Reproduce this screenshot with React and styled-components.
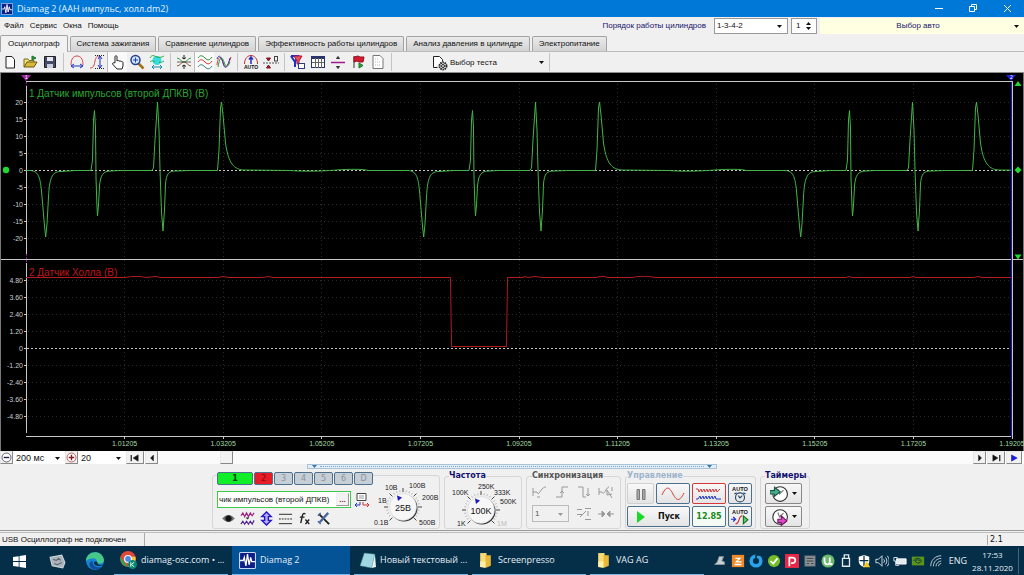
import React, { useState } from "react";
import styled, { createGlobalStyle } from "styled-components";

const GlobalStyle = createGlobalStyle`
  * {
    box-sizing: border-box;
  }
  body {
    margin: 0;
    background: #f0f0f0;
    color: #111;
    font-family: "Liberation Sans", Arial, sans-serif;
    font-size: 8px;
    line-height: 10px;
  }
  button, input, select {
    margin: 0;
    padding: 0;
    border: none;
    border-radius: 0;
    background: none;
    color: inherit;
    font: inherit;
  }
  svg {
    display: block;
    flex-shrink: 0;
  }
`;

const Window = styled.div`
  display: flex;
  flex-direction: column;
  min-height: 100vh;
`;

const TitleBar = styled.header`
  display: flex;
  align-items: center;
  height: 17px;
  background: #0078d7;
  color: #e4f2ff;
  font-family: "Open Sans", "Noto Sans", sans-serif;
  font-size: 9px;
  h1 {
    flex: 1;
    margin: 0 0 0 4px;
    font-size: inherit;
    font-weight: normal;
  }
  > svg {
    margin-left: 1px;
  }
`;

const WindowButton = styled.button`
  display: flex;
  align-items: center;
  justify-content: center;
  width: 34px;
  height: 17px;
`;

const MenuRow = styled.div`
  display: flex;
  align-items: center;
  height: 18px;
  padding-left: 4px;
  nav {
    display: flex;
    flex: 1;
    gap: 6px;
  }
`;

const OrderLabel = styled.label`
  margin-right: 8px;
  color: #15156e;
`;

const SelectWrap = styled.div`
  position: relative;
  width: ${(p) => p.$width || "auto"};
  height: ${(p) => p.$height || "16px"};
  margin-right: ${(p) => p.$gap || "0"};
  border: ${(p) => p.$border || "none"};
  background: ${(p) => p.$bg || "#fff"};
  color: ${(p) => p.$color || "#111"};
  font-size: ${(p) => p.$size || "8px"};
  select {
    display: block;
    width: 100%;
    height: 100%;
    padding-left: 2px;
    padding-right: ${(p) => (p.$align ? "10px" : "0")};
    appearance: none;
    text-align-last: ${(p) => p.$align || "left"};
  }
  svg {
    position: absolute;
    right: 5px;
    top: 50%;
    margin-top: -1px;
    pointer-events: none;
  }
`;

const Spinner = styled.div`
  display: flex;
  align-items: center;
  width: 26px;
  height: 16px;
  margin-right: 3px;
  border: 1px solid #999;
  background: #fff;
  input {
    width: 14px;
    padding-left: 4px;
  }
  div {
    display: flex;
    flex-direction: column;
    gap: 2px;
  }
  button {
    display: block;
  }
`;

const TabRow = styled.div`
  display: flex;
  align-items: flex-end;
  gap: 2px;
  height: 17px;
  border-bottom: 1px solid #bcbcbc;
`;

const Tab = styled.button`
  height: ${(p) => (p.$active ? "17px" : "15px")};
  padding: 0 ${(p) => (p.$active ? "7px" : "6px")};
  margin-bottom: ${(p) => (p.$active ? "-1px" : "0")};
  border: 1px solid #a3a3a3;
  border-bottom: none;
  border-radius: 2px 2px 0 0;
  background: ${(p) =>
    p.$active ? "#f2f2f2" : "linear-gradient(#eaeaea, #d3d3d3)"};
`;

const ToolRow = styled.div`
  display: flex;
  align-items: center;
  height: 21px;
  border-bottom: 1px solid #8d8d8d;
`;

const ToolButton = styled.button`
  display: flex;
  align-items: center;
  justify-content: center;
  width: 20px;
  height: 20px;
  background: ${(p) => (p.$pressed ? "#fafafa" : "none")};
  border-left: ${(p) => (p.$pressed ? "1px solid #bbb" : "none")};
`;

const Divider = styled.div`
  width: 1px;
  height: 18px;
  margin: 0 3px;
  background: #c4c4c4;
`;

const TestButton = styled.button`
  display: flex;
  align-items: center;
  gap: 2px;
  width: 151px;
  height: 20px;
  padding: 1px 2px 0 37px;
  text-align: left;
  span {
    flex: 1;
  }
`;

const Scope = styled.main`
  flex: 1;
  background: #000;
  svg {
    width: 100%;
    height: auto;
  }
`;

const ScrollRow = styled.div`
  display: flex;
  align-items: center;
  height: 13px;
  background: #fff;
`;

const StepButton = styled.button`
  display: flex;
  align-items: center;
  justify-content: center;
  width: ${(p) => p.$width || "13px"};
  height: 13px;
  margin-right: ${(p) => p.$gap || "1px"};
  border: 1px solid #e8e8e8;
  border-right-color: #888;
  border-bottom-color: #888;
  background: #f2f2f2;
`;

const Track = styled.div`
  flex: 1;
  height: 13px;
  padding-left: 61px;
  background: #fbfbfb;
`;

const Splitter = styled.div`
  align-self: center;
  display: flex;
  align-items: center;
  justify-content: space-between;
  width: 40%;
  height: 5px;
  padding: 0 4px;
  margin-bottom: 2px;
  border: 1px solid #a9c4da;
  background: #e3edf6;
  i {
    flex: 1;
    margin: 0 3px;
    border-top: 1px dotted #7ea6c8;
  }
`;

const Panel = styled.section`
  display: flex;
  justify-content: center;
  gap: 4px;
  height: 60px;
  padding-right: 2px;
  border-bottom: 1px solid #9a9a9a;
`;

const Group = styled.fieldset`
  min-width: 0;
  height: 58px;
  width: ${(p) => p.$width};
  margin: 0;
  padding: 2px ${(p) => p.$pad || "6px"} 0;
  border: 1px solid #d6d6d6;
  border-radius: 3px;
  legend {
    margin-left: ${(p) => p.$indent || "0"};
    padding: 0;
    color: ${(p) => p.$color || "#101070"};
    font-family: "DejaVu Sans", sans-serif;
    font-size: 8px;
    line-height: 10px;
    font-weight: bold;
  }
`;

const ChannelGroup = styled.div`
  display: flex;
  width: 228px;
  height: 54px;
  margin-top: 4px;
  padding-left: 4px;
  border: 1px solid #d6d6d6;
  border-radius: 3px;
  > svg {
    margin-top: 4px;
  }
`;

const ChannelSide = styled.div`
  width: 157px;
  margin-top: -4px;
  flex-shrink: 0;
`;

const ChannelRow = styled.div`
  display: flex;
  gap: 1px;
`;

const ChannelButton = styled.button`
  width: ${(p) => (p.$wide ? "36px" : "19px")};
  height: 13px;
  border: 1px solid #4e708f;
  border-radius: 2px;
  background: ${(p) => p.$bg || "#c6ced6"};
  color: ${(p) => p.$color || "#8b939b"};
  font-family: "DejaVu Sans", sans-serif;
  font-weight: ${(p) => (p.$wide ? "bold" : "normal")};
`;

const NameRow = styled.div`
  display: flex;
  align-items: center;
  gap: 3px;
  margin-top: 6px;
`;

const NameField = styled.div`
  display: flex;
  align-items: center;
  width: 134px;
  height: 17px;
  padding: 1px;
  border: 1px solid #3fc94c;
  background: #fff;
  input {
    flex: 1;
    min-width: 0;
  }
  button {
    width: 13px;
    height: 13px;
    border: 1px solid #eee;
    border-right-color: #999;
    border-bottom-color: #999;
    background: #f2f2f2;
    color: #a02020;
    font-weight: bold;
    line-height: 6px;
  }
`;

const IconRow = styled.div`
  display: flex;
  gap: 3px;
  margin-top: 2px;
  padding-left: 4px;
  button {
    width: 16px;
    height: 16px;
  }
`;

const SyncGrid = styled.div`
  display: grid;
  grid-template-columns: repeat(4, 17px);
  gap: 5px;
  align-items: center;
  button {
    height: 17px;
  }
  > div {
    grid-column: span 2;
  }
`;

const ControlGrid = styled.div`
  display: grid;
  grid-template-columns: 27px 34px 34px 24px;
  gap: 2px;
`;

const TimerColumn = styled.div`
  display: grid;
  grid-template-columns: 37px;
  gap: 2px;
`;

const PanelButton = styled.button`
  grid-column: ${(p) => (p.$wide ? "span 2" : "auto")};
  display: flex;
  align-items: center;
  justify-content: center;
  gap: ${(p) => p.$gap || "0"};
  height: 21px;
  border: 1px solid ${(p) => p.$edge || "#4e708f"};
  border-radius: 2px;
  background: ${(p) => p.$bg || "linear-gradient(#f8f8f8, #e4e4e4)"};
  color: ${(p) => p.$color || "#111"};
  font-family: "DejaVu Sans", sans-serif;
  font-size: 8px;
  font-weight: bold;
`;

const StatusBar = styled.footer`
  display: flex;
  align-items: center;
  height: 14px;
  margin-top: 1px;
  border-top: 1px solid #bdbdbd;
  p {
    margin: 0;
    padding-left: 2px;
    line-height: 13px;
    border-right: 1px solid #aaa;
    width: 145px;
  }
  span {
    margin-left: auto;
    width: 37px;
    padding-left: 2px;
    border-left: 1px solid #aaa;
    font-family: "DejaVu Sans", sans-serif;
  }
`;

const TaskBar = styled.nav`
  display: flex;
  height: 30px;
  background: #052e49;
  color: #e6eef4;
  font-family: "Open Sans", "Noto Sans", sans-serif;
  font-size: 9px;
`;

const Launcher = styled.button`
  display: flex;
  align-items: center;
  justify-content: center;
  width: 38px;
`;

const Task = styled.button`
  display: flex;
  align-items: center;
  gap: 4px;
  width: ${(p) => (p.$active ? "118px" : "114px")};
  margin-right: 4px;
  padding-left: ${(p) => (p.$active ? "7px" : "5px")};
  border-bottom: 2px solid #76b9ed;
  background: ${(p) => (p.$active ? "#045397" : "none")};
  white-space: nowrap;
`;

const Tray = styled.div`
  display: flex;
  align-items: center;
  margin-left: auto;
  gap: 4px;
  > span {
    margin-left: 2px;
  }
`;

const Clock = styled.time`
  width: 48px;
  padding-right: 4px;
  margin: 0 5px 0 0;
  border-right: 1px solid #42637a;
  text-align: center;
  font-size: 8px;
  line-height: 13px;
`;

const Icon = ({ size = 16, children }) => (
  <svg
    width={size}
    height={size}
    viewBox="0 0 16 16"
    fill="none"
    stroke="#222"
    aria-hidden="true"
  >
    {children}
  </svg>
);

const Arrow = ({ up, color = "#111" }) => (
  <svg width="5" height="3" viewBox="0 0 5 3" aria-hidden="true">
    <path d={up ? "M0 3h5L2.5 0z" : "M0 0h5L2.5 3z"} fill={color} />
  </svg>
);

const AutoText = ({ y }) => (
  <text
    x="8"
    y={y}
    textAnchor="middle"
    fontFamily="Liberation Sans, Arial"
    fontSize="5"
    fontWeight="bold"
    fill="#111"
    stroke="none"
  >
    AUTO
  </text>
);

const DiamagIcon = ({ size }) => (
  <Icon size={size}>
    <rect x=".5" y=".5" width="15" height="15" rx="1" fill="#0b1f86" stroke="#c9d6f0" />
    <path d="M1 8h3l1-3 1.5 8L8 2l1.5 10L11 5l1 4h3" stroke="#fff" strokeWidth="1.2" />
  </Icon>
);

const toolGroups = [
  [
    ["Новый", <path d="M4 2.500h6l2.500 3v8.500H4z" fill="#fff" />],
    [
      "Открыть",
      <>
        <path d="M2 13V5h4l1 1.500h5v2" fill="#f3e27a" stroke="#77701c" />
        <path d="M2 13l3-5h10l-3 5z" fill="#d9b93a" stroke="#665a10" />
        <path d="M10 2v4l4-2z" fill="#1ca038" stroke="#1c7030" />
      </>,
    ],
    [
      "Сохранить",
      <>
        <path d="M2.500 2.500h11v11h-11z" fill="#454b66" />
        <path d="M5 3h6v4H5z" fill="#e6e9f4" stroke="none" />
        <path d="M5 10h6v4H5z" fill="#c9cede" stroke="none" />
      </>,
    ],
  ],
  [
    [
      "По горизонтали",
      <>
        <path d="M2 11C2 4 5 2 8 2s6 2 6 9" stroke="#d34848" />
        <path d="M2 12h12M5 10l-3 2 3 2M11 10l3 2-3 2" stroke="#2030c0" />
      </>,
    ],
    [
      "По вертикали",
      <>
        <path d="M1 14c4 0 4-3 5-7s2-5 4-5" stroke="#d34848" />
        <path d="M11 2v12M9 5l2-3 2 3M9 11l2 3 2-3" stroke="#2030c0" />
        <path d="M6 1.500h9M6 14.500h9" strokeDasharray="1 1" />
      </>,
    ],
    [
      "Рука",
      <path
        d="M5 9V2.500c0-1 2-1 2 0V7c1-1 2-.5 2 .3 1-.8 2-.3 2 .5 1-.7 2 0 2 1V12l-1 3H7l-4.500-5c0-1.500 1.500-1.500 2.500-1z"
        fill="#fff"
      />,
      true,
    ],
    [
      "Лупа",
      <>
        <path d="M9.500 9.500l5 5" stroke="#a0701c" strokeWidth="2.500" />
        <circle cx="6.500" cy="6" r="4.500" fill="#cfe8ff" stroke="#26408c" strokeWidth="1.500" />
        <path d="M4 6h5M6.500 3.500v5" stroke="#2040c0" />
      </>,
    ],
    [
      "Авто масштаб",
      <>
        <circle cx="8" cy="6.500" r="4.500" fill="#36dce0" stroke="none" />
        <path d="M1 4c2-4 4-2 7-1s5 0 7-1" stroke="#28a844" />
        <path d="M1 8c2-2 4-1 5 0M10 8c2 1 3 0 5-1" stroke="#28a844" />
        <path d="M3 13h10M5 11l-2 2 2 2M11 11l2 2-2 2" stroke="#1b8aa8" />
      </>,
    ],
  ],
  [
    [
      "Сжать",
      <>
        <path d="M1 4c3 0 4 4 7 4s4-4 7-4" stroke="#3a9a48" />
        <path d="M1 12c3 0 4-4 7-4s4 4 7 4" stroke="#8a5a30" />
        <path d="M1 8h14" stroke="#444" strokeWidth=".8" />
        <path d="M8 1v4M6 3.500L8 5l2-1.500M8 15v-4M6 12.500L8 11l2 1.500" />
      </>,
    ],
    [
      "Осциллограммы",
      <>
        <path d="M1 4c2-3 4-3 7 0s5 2 7-1" stroke="#2a9a3a" />
        <path d="M1 8c2-3 4-3 7 0s5 2 7-1" stroke="#d33" />
        <path d="M1 13c2-3 4-3 7 0s5 2 7-1" stroke="#388080" />
      </>,
      true,
    ],
    [
      "Наложение",
      <>
        <path d="M1 11c1-9 4-10 6-3s4 7 8-5" stroke="#d33" />
        <path d="M1 5c2-5 4-3 6 4s4 6 7-5" stroke="#33b" />
        <path d="M2 13C4 2 6 2 8 8s4 5 6 0" stroke="#2a9a3a" />
      </>,
    ],
  ],
  [
    [
      "Авто",
      <>
        <path d="M1.500 10C1.500 4 5 1.500 8 1.500s6.500 2.500 6.500 8.500" stroke="#c03030" />
        <path d="M8 3v7M6 5.500L8 3l2 2.500" stroke="#2030c0" strokeWidth="1.500" />
        <AutoText y="15" />
      </>,
    ],
    [
      "Ноль",
      <>
        <path d="M0 9h16" stroke="#555" strokeDasharray="2 1" />
        <path d="M3.500 4h4l-2 3zM3.500 14h4l-2-3z" fill="#b01830" stroke="#801020" />
        <rect x="11.500" y="2.500" width="3" height="4.500" stroke="#444" />
      </>,
    ],
  ],
  [
    [
      "Фильтр",
      <>
        <path d="M1 2l4 6v5M1 2h7L5 8" stroke="#2030c0" strokeWidth="2" />
        <path d="M4 2h8L9 7v3H7V7z" fill="#e05060" stroke="#b01840" />
        <rect x="8.500" y="9.500" width="6" height="5" fill="#fff" stroke="#2b3d80" />
      </>,
    ],
    [
      "Таблица",
      <>
        <rect x="1.500" y="2.500" width="13" height="11" fill="#fff" stroke="#28346a" />
        <path d="M2 4h12" stroke="#28346a" strokeWidth="2" />
        <path d="M5.500 4v10M8.500 4v10M11.500 4v10M2 8.500h12" stroke="#666" />
      </>,
    ],
    [
      "Разделить",
      <>
        <path d="M1 8.500h14" stroke="#a01890" strokeWidth="1.500" />
        <path d="M6.500 4.500h3L8 2.500zM6.500 12.500h3L8 14.500z" fill="#333" stroke="#333" />
      </>,
    ],
    [
      "Маркер",
      <>
        <path d="M4 2v12" stroke="#333" />
        <path d="M4 3l4-1 2 1h4l-1 5H9L7 7 4 8z" fill="#d81830" stroke="#901020" />
        <path d="M9 9v5l4-2.500z" fill="#28b040" stroke="#187028" />
      </>,
    ],
    [
      "Отчет",
      <>
        <path d="M3 1.500h7l3 3V14.500H3z" fill="#fff" stroke="#777" />
        <path d="M5 5h3M5 8h6M5 11h5" stroke="#bbb" strokeDasharray="1 1" />
      </>,
    ],
  ],
];

const tabs = [
  "Осциллограф",
  "Система зажигания",
  "Сравнение цилиндров",
  "Эффективность работы цилиндров",
  "Анализ давления в цилиндре",
  "Электропитание",
];

const gridX = [1, 2, 3, 4, 5, 6, 7, 8, 9, 10].map((n) => 26 + n * 98.6);
const rows1 = [20, 15, 10, 5, 0, -5, -10, -15, -20];
const rows2 = ["4.80", "3.60", "2.40", "1.20", "0", "-1.20", "-2.40", "-3.60", "-4.80"];
const rowY = (zero, i) => zero + Math.round((i - 4) * 16.9) + 0.5;

// one crankshaft turn, the same shape repeats three times
const pulse =
  "M26 170.500H30C38 171 40 176 41.500 191L44.500 226L45.700 237L47 224L48.500 197C49.500 178 52 172 60 171.500L76 170.500H91L92.500 160L93.500 120L94.500 110.500L95.500 128L96 178L97 207L97.500 216L98.500 205L99.500 186C100.500 175 103 171 111 171L120 170.500H152L153.500 168L155 140L157.500 102L159 130L160 170L161.500 212L163 231L164.500 210L165.500 184C166.500 173 169 171 176 171L190 170.500H217.500L219 150L220.500 108L221.500 102L223 115L225.500 143C228 160 232 169 243 170L290 170.500C310 172 330 170.500 337 170C350 169 364 169 368 170.500H405";

const Chart = () => (
  <svg viewBox="0 73 1024 378" fontFamily="Liberation Sans, Arial" fontSize="7" role="img">
    <defs>
      <clipPath id="plot">
        <rect x="26" y="82" width="985" height="354" />
      </clipPath>
    </defs>
    <g stroke="#292d29" strokeDasharray="1 3" shapeRendering="crispEdges">
      {gridX.slice(0, 9).map((x) => (
        <path key={x} d={`M${x} 84V436`} />
      ))}
      {rows1.map((v, i) => (
        <path key={v} d={`M28 ${rowY(170, i)}H1011M28 ${rowY(348, i)}H1011`} />
      ))}
    </g>
    <g stroke="#c8c8c8" shapeRendering="crispEdges">
      <path d="M26 81.500H1012M1 259.500H1023M26 436.500H1012" />
      <path d="M26.500 86V255M26.500 263V433M1012.500 81V437" />
      <path d="M.5 73V451M1023.500 73V451" stroke="#777" />
      {rows1.map((v, i) => (
        <path key={v} d={`M24 ${rowY(170, i)}h3M24 ${rowY(348, i)}h3`} />
      ))}
      {gridX.map((x) => (
        <path key={x} d={`M${x} 436v3`} />
      ))}
      <path d="M27 170.500H1011M27 348.500H1011" strokeDasharray="2 2" />
    </g>
    <path d="M1011.500 82V437" stroke="#1414c8" />
    <path d="M26.500 82v4M26.500 254v9" stroke="#8a188a" strokeDasharray="2 1" />
    <g fill="#cccccc" textAnchor="end">
      {rows1.map((v, i) => (
        <text key={v} x="23" y={rowY(172, i)}>
          {v}
        </text>
      ))}
      {rows2.map((v, i) => (
        <text key={v} x="23" y={rowY(350, i)}>
          {v}
        </text>
      ))}
    </g>
    <g fill="#a4dca4" textAnchor="middle">
      {gridX.map((x, i) => (
        <text key={x} x={x} y="446">
          {(1.01205 + i * 0.02).toFixed(5)}
        </text>
      ))}
    </g>
    <g clipPath="url(#plot)" fill="none" strokeWidth="1">
      <g stroke="#43b548">
        <path d={pulse} />
        <path d={pulse} transform="translate(378 0)" />
        <path d={pulse} transform="translate(755 0)" />
      </g>
      <path
        d="M26 277.500H125C132 276 140 276 146 277.500L156 276.500L161 277.500H218L223 276.500L229 277.500H262L269 276.500L273 277.500H450.500L451.500 346.500H506.500L507.500 277.500H522L525 276.500L528 277.500L535 276.500L542 277.500H596C600 276 604 276 608 277.500H632C638 276 648 276 656 277.500H846L849 276.500L852 277.500H910L913 276.500L916 277.500H974L978 276.500L982 277.500H1012"
        stroke="#b01c20"
      />
    </g>
    <text x="29" y="97" fontSize="10" fill="#27a832">
      1 Датчик импульсов (второй ДПКВ) (В)
    </text>
    <text x="29" y="276" fontSize="10" fill="#c01418">
      2 Датчик Холла (В)
    </text>
    <path d="M21 75h10l-5 6z" fill="#a028a0" />
    <path d="M1006 75h10l-5 6z" fill="#2020d8" />
    <g fontSize="5" fill="#fff">
      <text x="25" y="79">1</text>
      <text x="1010" y="79">2</text>
    </g>
    <g fill="#20d830">
      <circle cx="6" cy="170" r="3.200" />
      <path d="M1018 166.500l3.500 3.500-3.500 3.500-3.500-3.500zM1014.500 86h7l-3.500-5zM1014.500 254.500h7l-3.500 5z" />
    </g>
  </svg>
);

const Knob = ({ width, cx, value, labels }) => {
  const ticks = Array.from({ length: 25 }, (_, i) => ((135 + i * 11.25) * Math.PI) / 180);
  return (
    <svg
      width={width}
      height="48"
      viewBox={`0 0 ${width} 48`}
      fontFamily="Liberation Sans, Arial"
      fontSize="7"
      role="img"
    >
      {ticks.map((a, i) => (
        <path
          key={a}
          d={`M${cx + 15 * Math.cos(a)} ${27 + 15 * Math.sin(a)}L${
            cx + (i % 4 ? 17 : 19) * Math.cos(a)
          } ${27 + (i % 4 ? 17 : 19) * Math.sin(a)}`}
          stroke={i % 4 ? "#aaa" : "#444"}
          strokeWidth={i % 4 ? 0.8 : 1}
        />
      ))}
      <circle cx={cx + 1} cy="28" r="13.500" fill="#333" />
      <circle cx={cx} cy="27" r="13.500" fill="#f7f7f7" stroke="#ccc" strokeWidth=".5" />
      <path d={`M${cx - 6} 15.500l5 2-4 3.500z`} fill="#1818c8" />
      <text x={cx} y="31" fontSize="9" textAnchor="middle" fill="#111">
        {value}
      </text>
      {labels.map(([t, x, y, c]) => (
        <text key={t} x={x} y={y} fill={c || "#222"}>
          {t}
        </text>
      ))}
    </svg>
  );
};

const channelIcons = [
  [
    "Видимость",
    <>
      <path d="M2 8c3-4 9-4 12 0-3 4-9 4-12 0z" fill="#777" stroke="#555" />
      <circle cx="8" cy="8" r="3" fill="#111" />
    </>,
  ],
  [
    "Сглаживание",
    <>
      <path d="M1 5l2-3 2 4 2-4 2 4 2-4 2 3 2-3" stroke="#a02080" strokeWidth="1.200" />
      <path d="M6 7h4l-2 2z" fill="#222" stroke="none" />
      <path d="M1 14l2-3 2 3 2-3 2 3 2-3 2 3 2-4" stroke="#502090" strokeWidth="1.200" />
    </>,
  ],
  [
    "Инверсия",
    <path d="M8 1l5 5h-3v4h3l-5 5-5-5h3V6H3z" fill="#b8a8ff" stroke="#2018c0" strokeWidth="1.500" />,
  ],
  [
    "Линии",
    <>
      <path d="M1 3.500h14M1 13.500h14" />
      <path d="M1 8.500h14" strokeDasharray="2 1" />
    </>,
  ],
  [
    "Функция",
    <path d="M9 3c-2-1-3 0-3.500 3L4 13M3 6.500h5M9 9l4 5M13 9l-4 5" strokeWidth="1.500" />,
  ],
  [
    "Настройка",
    <>
      <path d="M3 3l11 11" strokeWidth="2" />
      <path d="M13 2L4 12" stroke="#48699c" strokeWidth="2.500" />
      <path d="M2 5l3-3M2 11l3 3" stroke="#48699c" strokeWidth="1.500" />
    </>,
  ],
];

const syncIcons = [
  <path d="M1 4v8M1 8h4c2 6 3-5 9-5M5 13h3" />,
  <path d="M2 13h6V3h6M8 7l-2 2M8 7l2 2" />,
  <path d="M2 3h5v10h3M12 4v8M10 10l2 2 2-2" />,
  <path d="M1 4v7M1 8h3c2 5 4-5 7-5M9 6l5 8M9 6v5l5-1M14 3v4" />,
];

const clockFace = (
  <>
    <circle cx="9" cy="8" r="6.500" fill="#fff" stroke="#333" />
    <path d="M7 4l1.500 4L12 4.500" stroke="#777" />
  </>
);

const trayIcons = [
  <path d="M2 12h11V9l-3-1 2-5H7L5 9z" fill="#c8cfd2" stroke="#8d979c" />,
  <>
    <rect x="1" y="1" width="14" height="14" fill="#f08a28" stroke="none" />
    <path d="M5 5h5L6 9h6M4 12h8" stroke="#fff" strokeWidth="1.500" />
  </>,
  <>
    <circle cx="8" cy="8" r="5.500" stroke="#28a4ea" strokeWidth="4" />
    <path d="M8 1v8M8 1h5" stroke="#062e49" strokeWidth="2" />
  </>,
  <>
    <circle cx="8" cy="8" r="7" fill="#74bc28" stroke="none" />
    <path d="M4 8l3 3 5-6" stroke="#fff" strokeWidth="2" />
  </>,
  <>
    <rect x="0" y="0" width="16" height="16" fill="#e62848" stroke="none" />
    <path d="M5 14V4h3.500a3 3 0 010 6.500H7" stroke="#fff" strokeWidth="2" />
  </>,
  <>
    <rect x="2" y="2" width="12" height="12" fill="#8d979c" stroke="#4c565c" />
    <path d="M4 5h8M4 8h8M4 11h3M9 11h3" stroke="#333" />
  </>,
  <>
    <circle cx="8" cy="8" r="7.500" fill="#6cb86c" stroke="none" />
    <path d="M4 4v4c0 5 6 5 6 1V4M10 11c1 1 2 1 3 0" stroke="#fff" strokeWidth="2" />
  </>,
  <path d="M6 5V1h5v4M4 5h8v9H4z" stroke="#e4e9ec" strokeWidth="1.500" />,
  <>
    <path d="M8 1l6 2v5c0 4-3 6-6 7-3-1-6-3-6-7V3z" fill="#fff" stroke="none" />
    <path d="M8 2v12M3 7.500h10" stroke="#062e49" strokeWidth="1.500" />
    <path d="M7 15h8l-4-7z" fill="#f8c828" stroke="none" />
  </>,
  <path d="M1 6v4h3l4 4V2L4 6zM10 6c1 1 1 3 0 4M12 4c2 2 2 6 0 8M14 2c3 4 3 8 0 12" stroke="#e4e9ec" />,
  <>
    <path d="M4 5.500h11v6H4z" fill="#e4e9ec" stroke="#fff" />
    <path d="M1 4h4v4H1zM3 8v5h4" stroke="#e4e9ec" />
  </>,
  <>
    <rect x="1" y="3" width="14" height="10" fill="#5c9418" stroke="none" />
    <path d="M3 8c2-4 7-4 9 0-2 3-6 3-7 0 1-2 4-2 5 0" stroke="#062e49" />
  </>,
  <path d="M2 14C2 7 7 2 14 2M5 14c0-5 4-9 9-9M8 14c0-3 3-6 6-6M11 14c0-2 1-3 3-3" stroke="#cfd8dc" />,
];

const notepad = (
  <>
    <path d="M5 1l10 1-3 13-11-2z" fill="#9fd8e0" stroke="#48838c" strokeWidth=".5" />
    <path d="M12 15l3-13 1 12z" fill="#e8f0f0" stroke="none" />
  </>
);

const folder = (
  <>
    <path d="M3 1h6v13H3z" fill="#f8dc78" stroke="none" />
    <path d="M8 3h5v10l-5 2z" fill="#e8b838" stroke="none" />
    <path d="M3 9h5v6l-5-1z" fill="#fff0a8" stroke="none" />
  </>
);

const App = () => {
  const [tab, setTab] = useState(tabs[0]);
  const [channel, setChannel] = useState("чик импульсов (второй ДПКВ)");

  return (
    <Window>
      <GlobalStyle />
      <TitleBar>
        <DiamagIcon size={12} />
        <h1>Diamag 2 (ААН импульс, холл.dm2)</h1>
        <WindowButton aria-label="Свернуть">
          <svg width="9" height="9" stroke="#fff">
            <path d="M0 4.500h8" />
          </svg>
        </WindowButton>
        <WindowButton aria-label="Развернуть">
          <svg width="9" height="9" stroke="#fff" fill="none">
            <path d="M.5 2.500h5v5h-5zM2.500 2V.5h5v5H6" />
          </svg>
        </WindowButton>
        <WindowButton aria-label="Закрыть">
          <svg width="9" height="9" stroke="#fff">
            <path d="M1 1l7 7M8 1l-7 7" />
          </svg>
        </WindowButton>
      </TitleBar>

      <MenuRow>
        <nav>
          {["Файл", "Сервис", "Окна", "Помощь"].map((m) => (
            <button key={m}>{m}</button>
          ))}
        </nav>
        <OrderLabel htmlFor="order">Порядок работы цилиндров</OrderLabel>
        <SelectWrap $width="74px" $border="1px solid #999" $gap="3px">
          <select id="order">
            <option>1-3-4-2</option>
          </select>
          <Arrow />
        </SelectWrap>
        <Spinner>
          <input aria-label="Цилиндр" defaultValue="1" />
          <div>
            <button aria-label="Больше">
              <Arrow up />
            </button>
            <button aria-label="Меньше">
              <Arrow />
            </button>
          </div>
        </Spinner>
        <SelectWrap $width="20%" $bg="#ffffe1" $color="#15156e" $align="center">
          <select aria-label="Авто">
            <option>Выбор авто</option>
          </select>
          <Arrow />
        </SelectWrap>
      </MenuRow>

      <TabRow>
        {tabs.map((t) => (
          <Tab key={t} $active={t === tab} onClick={() => setTab(t)}>
            {t}
          </Tab>
        ))}
      </TabRow>

      <ToolRow>
        {toolGroups.map((group, i) => (
          <React.Fragment key={i}>
            {group.map(([name, art, pressed]) => (
              <ToolButton key={name} aria-label={name} $pressed={pressed}>
                <Icon>{art}</Icon>
              </ToolButton>
            ))}
            <Divider />
          </React.Fragment>
        ))}
        <TestButton>
          <Icon>
            <path d="M1.500 12.500v-11h6l3 3v2" fill="#fff" />
            <path d="M1.500 12.500h4" />
            <circle cx="11" cy="11" r="3.500" strokeWidth="2" strokeDasharray="1.500 .7" />
            <circle cx="11" cy="11" r="1.500" />
          </Icon>
          <span>Выбор теста</span>
          <Arrow />
        </TestButton>
        <Divider />
      </ToolRow>

      <Scope>
        <Chart />
      </Scope>

      <ScrollRow>
        <StepButton aria-label="Уменьшить">
          <Icon size={11}>
            <circle cx="8" cy="8" r="6.500" fill="#fff" stroke="#224" />
            <path d="M4 8h8" strokeWidth="2" stroke="#224" />
          </Icon>
        </StepButton>
        <SelectWrap $width="51px" $height="13px" $size="9px">
          <select aria-label="Развертка">
            <option>200 мс</option>
          </select>
          <Arrow />
        </SelectWrap>
        <StepButton aria-label="Увеличить">
          <Icon size={11}>
            <circle cx="8" cy="8" r="6.500" fill="#fff" stroke="#a02020" />
            <path d="M4 8h8M8 4v8" strokeWidth="2" stroke="#802020" />
          </Icon>
        </StepButton>
        <SelectWrap $width="47px" $height="13px" $size="9px">
          <select aria-label="Масштаб">
            <option>20</option>
          </select>
          <Arrow />
        </SelectWrap>
        <StepButton $width="18px" aria-label="В начало">
          <Icon size={10}>
            <path d="M2 3v10" strokeWidth="2" />
            <path d="M13 3v10L5 8z" fill="#111" />
          </Icon>
        </StepButton>
        <StepButton aria-label="Назад">
          <Icon size={8}>
            <path d="M11 2v12L5 8z" fill="#111" />
          </Icon>
        </StepButton>
        <Track>
          <StepButton aria-label="Прокрутка" />
        </Track>
        <StepButton aria-label="Вперед">
          <Icon size={8}>
            <path d="M5 2v12l6-6z" fill="#111" />
          </Icon>
        </StepButton>
        <StepButton $width="18px" aria-label="В конец">
          <Icon size={10}>
            <path d="M14 3v10" strokeWidth="2" />
            <path d="M3 3v10l8-5z" fill="#111" />
          </Icon>
        </StepButton>
        <StepButton $width="16px" $gap="2px" aria-label="Играть">
          <Icon size={10}>
            <path d="M4 3v10l9-5z" fill="#1818e0" stroke="#1818e0" />
          </Icon>
        </StepButton>
      </ScrollRow>

      <Splitter>
        <Arrow color="#3878a8" />
        <i />
        <Arrow color="#3878a8" />
      </Splitter>

      <Panel>
        <ChannelGroup>
          <ChannelSide>
            <ChannelRow>
              <ChannelButton $wide $bg="#10ee28" $color="#063a08">
                1
              </ChannelButton>
              <ChannelButton $bg="#e81c24" $color="#7a0c10">
                2
              </ChannelButton>
              {["3", "4", "5", "6", "D"].map((c) => (
                <ChannelButton key={c}>{c}</ChannelButton>
              ))}
            </ChannelRow>
            <NameRow>
              <NameField>
                <input
                  aria-label="Датчик"
                  value={channel}
                  onChange={(e) => setChannel(e.target.value)}
                />
                <button>...</button>
              </NameField>
              <Icon>
                <path d="M3 1.500h9v7H3z" fill="#fff" stroke="#444" />
                <path d="M5 4h5M5 6h5" stroke="#999" />
                <path d="M6 10v3H1M3 11l-2 2 2 2" stroke="#2038c0" />
                <path d="M9 10v3h6M13 11l2 2-2 2" stroke="#d03030" />
              </Icon>
            </NameRow>
            <IconRow>
              {channelIcons.map(([name, art]) => (
                <button key={name} aria-label={name}>
                  <Icon size={15}>{art}</Icon>
                </button>
              ))}
            </IconRow>
          </ChannelSide>
          <Knob
            width={66}
            cx={29}
            value="25В"
            labels={[
              ["0.1В", 0, 45],
              ["1В", 4, 23],
              ["10В", 11, 10],
              ["100В", 35, 8],
              ["200В", 48, 20],
              ["500В", 45, 45],
            ]}
          />
        </ChannelGroup>

        <Group $width="78px" $pad="0px" $indent="4px">
          <legend>Частота</legend>
          <Knob
            width={76}
            cx={36}
            value="100K"
            labels={[
              ["100K", 7, 12],
              ["250K", 33, 6],
              ["333K", 49, 12],
              ["500K", 55, 21],
              ["1K", 12, 43],
              ["1M", 52, 43, "#bbb"],
            ]}
          />
        </Group>

        <Group $width="95px" $color="#555" $pad="5px">
          <legend>Синхронизация</legend>
          <SyncGrid>
            {syncIcons.map((art, i) => (
              <button key={i} disabled aria-label={`Фронт ${i + 1}`}>
                <Icon>
                  <g stroke="#999">{art}</g>
                </Icon>
              </button>
            ))}
            <SelectWrap
              $width="37px"
              $height="17px"
              $bg="#f0f0f0"
              $border="1px solid #bbb"
              $color="#555"
            >
              <select aria-label="Канал синхронизации">
                <option>1</option>
              </select>
              <Arrow color="#999" />
            </SelectWrap>
            <button disabled aria-label="Уровень">
              <Icon>
                <path d="M1 3.500h5M1 8.500h5M9 2.500h6M9 13.500h6M4 11l6-6M12 5v5" stroke="#999" />
              </Icon>
            </button>
            <button disabled aria-label="Центр">
              <Icon>
                <path d="M0 8h6M10 8h6M4 5l3 3-3 3zM12 5L9 8l3 3z" fill="#999" stroke="#999" />
              </Icon>
            </button>
          </SyncGrid>
        </Group>

        <Group $width="131px" $color="#9db4cc" $pad="1px">
          <legend>Управление</legend>
          <ControlGrid>
            <PanelButton $edge="#d0d0d0" aria-label="Пауза">
              <Icon>
                <path d="M4 3.500h2.500v10H4zM9.500 3.500H12v10H9.500z" fill="#aaa" stroke="#777" />
              </Icon>
            </PanelButton>
            <PanelButton aria-label="Синус">
              <svg width="24" height="16" fill="none" stroke="#d03838">
                <path d="M1 9C5 0 8 0 12 8s7 7 11-1" />
              </svg>
            </PanelButton>
            <PanelButton $edge="#d83838" aria-label="Сигналы">
              <svg width="28" height="16" fill="none">
                <path d="M1 3h2l1 3 2-3 1 3 2-3 1 3 2-3 1 3 2-3 1 3 2-3 1 3 2-3 1 3 3-3" stroke="#d03838" />
                <path d="M1 13h2l2-3 1 3 2-3 1 3 2-3 1 3 2-3 1 3 2-3 1 3 2-3 1 3h5" stroke="#2838c0" />
              </svg>
            </PanelButton>
            <PanelButton aria-label="Авто таймер">
              <Icon size={18}>
                <AutoText y="5" />
                <circle cx="8" cy="11" r="4" stroke="#28486c" />
                <path d="M6.500 9.500l1.500 2 2-2M3 8l2-1M13 8l-2-1" stroke="#28486c" />
              </Icon>
            </PanelButton>
            <PanelButton $wide $gap="13px">
              <svg width="8" height="12">
                <path d="M0 0v12l8-6z" fill="#18d828" />
              </svg>
              Пуск
            </PanelButton>
            <PanelButton $color="#188820" $bg="#f4faf4">
              12.85
            </PanelButton>
            <PanelButton aria-label="Авто пуск">
              <Icon size={18}>
                <AutoText y="5" />
                <path d="M0 10h4M2 8l2 2-2 2" stroke="#2030c0" />
                <path d="M4 14c4 1 2-7 6-7" stroke="#d03030" />
                <path d="M11 7v7l4-3.500z" fill="#58d068" stroke="#187028" />
              </Icon>
            </PanelButton>
          </ControlGrid>
        </Group>

        <Group $width="50px" $pad="4px">
          <legend>Таймеры</legend>
          <TimerColumn>
            <PanelButton $edge="#888" $gap="4px" aria-label="Таймер старта">
              <Icon size={18}>
                {clockFace}
                <path d="M0 5h4V2l5 4-5 4V8H0z" fill="#48b090" stroke="#205848" />
              </Icon>
              <Arrow />
            </PanelButton>
            <PanelButton $edge="#888" $gap="4px" aria-label="Таймер остановки">
              <Icon size={18}>
                {clockFace}
                <path d="M7 10h3V7l5 4.500-5 4V13H7z" fill="#e048c8" stroke="#701860" />
              </Icon>
              <Arrow />
            </PanelButton>
          </TimerColumn>
        </Group>
      </Panel>

      <StatusBar>
        <p>USB Осциллограф не подключен</p>
        <span>2.1</span>
      </StatusBar>

      <TaskBar>
        <Launcher aria-label="Пуск">
          <Icon size={13}>
            <path d="M0 2.500l7-1v6H0zM8 1.300L16 0v7.500H8zM0 8.500h7v6l-7-1zM8 8.500h8V16l-8-1.300z" fill="#fff" stroke="none" />
          </Icon>
        </Launcher>
        <Launcher aria-label="Клавиатура">
          <Icon size={17}>
            <path d="M1 4l11-2 3 7-2 5-10-2z" fill="#aab4ba" stroke="#ccd4d8" />
            <path d="M4 6l3 1 2-2 2 2M5 10l3 1 4-2" stroke="#5a6870" />
          </Icon>
        </Launcher>
        <Launcher aria-label="Edge">
          <Icon size={18}>
            <circle cx="8" cy="8" r="8" fill="#1684d4" stroke="none" />
            <path d="M0 8C0-1 14-3 16 7c0 4-6 4-6 2 0-5-7-4-10-1z" fill="#48c888" stroke="none" />
            <path d="M6 8c-1 4 3 7 8 5-3 4-9 3-11-1 0-3 1-4 3-4z" fill="#104c98" stroke="none" />
            <path d="M10 9c-1-1-3-1-3 1 1 3 6 3 8 1-3 1-5 0-5-2z" fill="#052e49" stroke="none" />
          </Icon>
        </Launcher>
        <Task>
          <Icon size={18}>
            <circle cx="8" cy="7" r="7" fill="#e04838" stroke="none" />
            <path d="M1.500 5L8 14a7 7 0 01-6.500-9z" fill="#38a050" stroke="none" />
            <path d="M8 14a7 7 0 006.500-9H8z" fill="#f8cc38" stroke="none" />
            <circle cx="8" cy="7" r="3" fill="#4888e8" stroke="#fff" />
            <circle cx="12" cy="12" r="4" fill="#088870" stroke="none" />
            <path d="M10.500 10v4M13.500 10l-2.500 2 2.500 2" stroke="#fff" strokeWidth=".8" />
          </Icon>
          diamag-osc.com • ...
        </Task>
        <Task $active>
          <DiamagIcon size={17} />
          Diamag 2
        </Task>
        <Task>
          <Icon size={17}>{notepad}</Icon>
          Новый текстовый ...
        </Task>
        <Task>
          <Icon size={17}>{folder}</Icon>
          Screenpresso
        </Task>
        <Task>
          <Icon size={17}>{folder}</Icon>
          VAG AG
        </Task>
        <Tray>
          {trayIcons.map((art, i) => (
            <Icon key={i} size={14}>
              {art}
            </Icon>
          ))}
          <span>ENG</span>
          <Clock>
            17:53
            <br />
            28.11.2020
          </Clock>
        </Tray>
      </TaskBar>
    </Window>
  );
};

export default App;
